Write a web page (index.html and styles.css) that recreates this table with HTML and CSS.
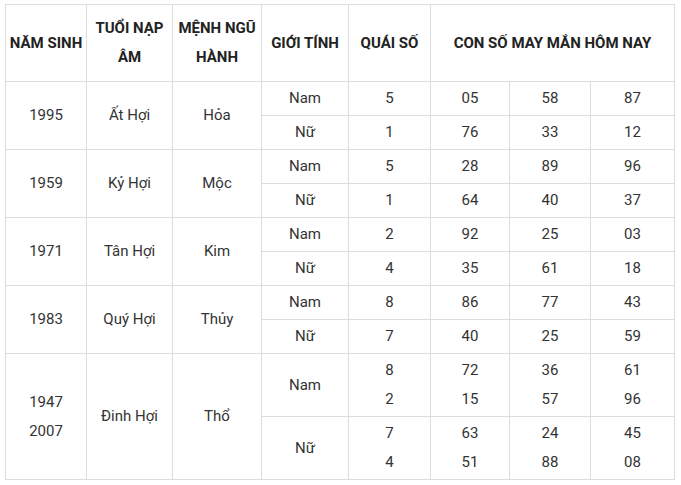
FILE: index.html
```html
<!DOCTYPE html>
<html>
<head>
<meta charset="utf-8">
<link rel="stylesheet" href="styles.css">
</head>
<body>
<table class="lucky">
<colgroup>
<col class="c1"><col class="c2"><col class="c3"><col class="c4"><col class="c5"><col class="c6"><col class="c7"><col class="c8">
</colgroup>
<thead>
<tr>
<th>NĂM SINH</th>
<th>TUỔI NẠP<br>ÂM</th>
<th>MỆNH NGŨ<br>HÀNH</th>
<th>GIỚI TÍNH</th>
<th>QUÁI SỐ</th>
<th colspan="3">CON SỐ MAY MẮN HÔM NAY</th>
</tr>
</thead>
<tbody>
<tr><td rowspan="2">1995</td><td rowspan="2">Ất Hợi</td><td rowspan="2">Hỏa</td><td>Nam</td><td>5</td><td>05</td><td>58</td><td>87</td></tr>
<tr><td>Nữ</td><td>1</td><td>76</td><td>33</td><td>12</td></tr>
<tr><td rowspan="2">1959</td><td rowspan="2">Kỷ Hợi</td><td rowspan="2">Mộc</td><td>Nam</td><td>5</td><td>28</td><td>89</td><td>96</td></tr>
<tr><td>Nữ</td><td>1</td><td>64</td><td>40</td><td>37</td></tr>
<tr><td rowspan="2">1971</td><td rowspan="2">Tân Hợi</td><td rowspan="2">Kim</td><td>Nam</td><td>2</td><td>92</td><td>25</td><td>03</td></tr>
<tr><td>Nữ</td><td>4</td><td>35</td><td>61</td><td>18</td></tr>
<tr><td rowspan="2">1983</td><td rowspan="2">Quý Hợi</td><td rowspan="2">Thủy</td><td>Nam</td><td>8</td><td>86</td><td>77</td><td>43</td></tr>
<tr><td>Nữ</td><td>7</td><td>40</td><td>25</td><td>59</td></tr>
<tr><td rowspan="2">1947<br>2007</td><td rowspan="2">Đinh Hợi</td><td rowspan="2">Thổ</td><td>Nam</td><td>8<br>2</td><td>72<br>15</td><td>36<br>57</td><td>61<br>96</td></tr>
<tr><td>Nữ</td><td>7<br>4</td><td>63<br>51</td><td>24<br>88</td><td>45<br>08</td></tr>
</tbody>
</table>
</body>
</html>
```
FILE: styles.css
```css
html, body {
  margin: 0;
  background: #fff;
}
body {
  padding: 4px 0 0 5px;
  font-family: Roboto, "Liberation Sans", sans-serif;
  font-size: 15px;
  color: #333;
}
.lucky {
  border-collapse: collapse;
  table-layout: fixed;
  width: 669px;
}
.c1 { width: 81px; }
.c2 { width: 86px; }
.c3 { width: 89px; }
.c4 { width: 87px; }
.c5 { width: 82px; }
.c6 { width: 79px; }
.c7 { width: 81px; }
.c8 { width: 84px; }
.lucky th,
.lucky td {
  border: 1px solid #ddd;
  text-align: center;
  vertical-align: middle;
  line-height: 29px;
  padding: 2px 2px;
}
.lucky th {
  font-weight: bold;
  color: #222;
  padding: 9px 2px;
}
```
